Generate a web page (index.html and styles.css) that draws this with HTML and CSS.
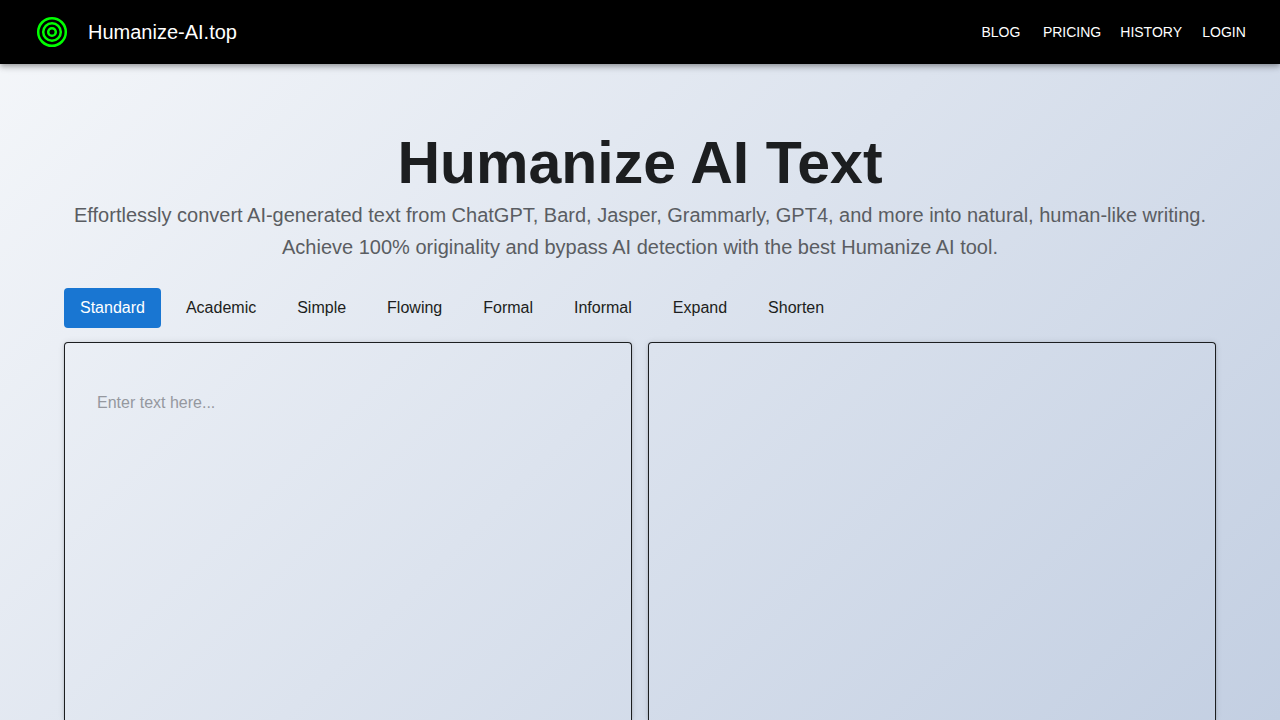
FILE: index.html
```html
<!DOCTYPE html>
<html lang="en">
<head>
<meta charset="utf-8">
<meta name="viewport" content="width=device-width, initial-scale=1">
<title>Humanize AI Text</title>
<link rel="stylesheet" href="styles.css">
</head>
<body>
<header class="app-bar">
  <a class="brand" href="#">
    <svg class="logo" viewBox="0 0 32 32" aria-hidden="true"><g fill="none" stroke="#0f0" stroke-width="2.5"><circle cx="16" cy="16" r="13.8"/><circle cx="16" cy="16" r="8.8"/><circle cx="16" cy="16" r="3.8"/></g></svg>
    <span class="brand-name">Humanize-AI.top</span>
  </a>
  <nav class="nav">
    <a class="nav-link" href="#">Blog</a>
    <a class="nav-link" href="#">Pricing</a>
    <a class="nav-link" href="#">History</a>
    <a class="nav-link" href="#">Login</a>
  </nav>
</header>
<main class="page">
  <h1 class="title">Humanize AI Text</h1>
  <p class="lead">Effortlessly convert AI-generated text from ChatGPT, Bard, Jasper, Grammarly, GPT4, and more into natural, human-like writing. Achieve 100% originality and bypass AI detection with the best Humanize AI tool.</p>
  <div class="modes">
    <button class="mode mode-active" type="button">Standard</button>
    <button class="mode" type="button">Academic</button>
    <button class="mode" type="button">Simple</button>
    <button class="mode" type="button">Flowing</button>
    <button class="mode" type="button">Formal</button>
    <button class="mode" type="button">Informal</button>
    <button class="mode" type="button">Expand</button>
    <button class="mode" type="button">Shorten</button>
  </div>
  <div class="panels">
    <section class="panel"><textarea class="input" aria-label="Text to humanize" placeholder="Enter text here..."></textarea></section>
    <section class="panel" aria-label="Result"></section>
  </div>
</main>
</body>
</html>
```
FILE: styles.css
```css
* { box-sizing: border-box; }
body {
  display: flex;
  flex-direction: column;
  min-height: 100vh;
  margin: 0;
  font-family: "Liberation Sans", Arial, sans-serif;
  color: #1c1e20;
  background: linear-gradient(135deg, #f5f7fa 0%, #c3cfe2 100%);
}
.app-bar {
  display: flex;
  justify-content: space-between;
  align-items: center;
  min-height: 64px;
  padding: 0 24px 0 36px;
  background: #000;
  box-shadow: 0 2px 4px -1px rgba(0,0,0,.2), 0 4px 5px rgba(0,0,0,.14), 0 1px 10px rgba(0,0,0,.12);
}
.brand { display: flex; align-items: center; gap: 20px; color: #fff; text-decoration: none; }
.logo { width: 32px; height: 32px; }
.brand-name { font-size: 20px; line-height: 32px; }
.nav { display: flex; gap: 1px; }
.nav-link {
  min-width: 64px;
  padding: 6px 9px;
  color: #fff;
  font-size: 14px;
  line-height: 24px;
  text-align: center;
  text-transform: uppercase;
  text-decoration: none;
}
.page { display: flex; flex: 1; flex-direction: column; padding: 63px 64px 0; }
.title { margin: 0; font-size: 59px; line-height: 72px; text-align: center; }
.lead { margin: 0 0 25px; font-size: 20px; line-height: 32px; text-align: center; color: #5a5d62; }
.modes { display: flex; flex-wrap: wrap; gap: 9px; margin-bottom: 14px; }
.mode {
  height: 40px;
  padding: 0 16px;
  border: 0;
  border-radius: 4px;
  background: none;
  color: inherit;
  font: 16px/24px "Liberation Sans", Arial, sans-serif;
}
.mode-active { background: #1976d2; color: #fff; }
.panels { display: grid; flex: 1; grid-template-columns: 1fr 1fr; gap: 16px; }
.panel {
  min-height: 320px;
  padding: 32px;
  border: 1px solid #1c1e20;
  border-bottom: 0;
  border-radius: 4px 4px 0 0;
  box-shadow: 0 2px 1px -1px rgba(0,0,0,.2), 0 1px 1px rgba(0,0,0,.14), 0 1px 3px rgba(0,0,0,.12), 0 0 6px rgba(0,0,0,.1);
}
.input {
  display: block;
  width: 100%;
  height: 100%;
  padding: 16px 0;
  border: 0;
  outline: 0;
  resize: none;
  background: none;
  color: inherit;
  font: 16px/23px "Liberation Sans", Arial, sans-serif;
}
.input::placeholder { color: #95989f; }
```
